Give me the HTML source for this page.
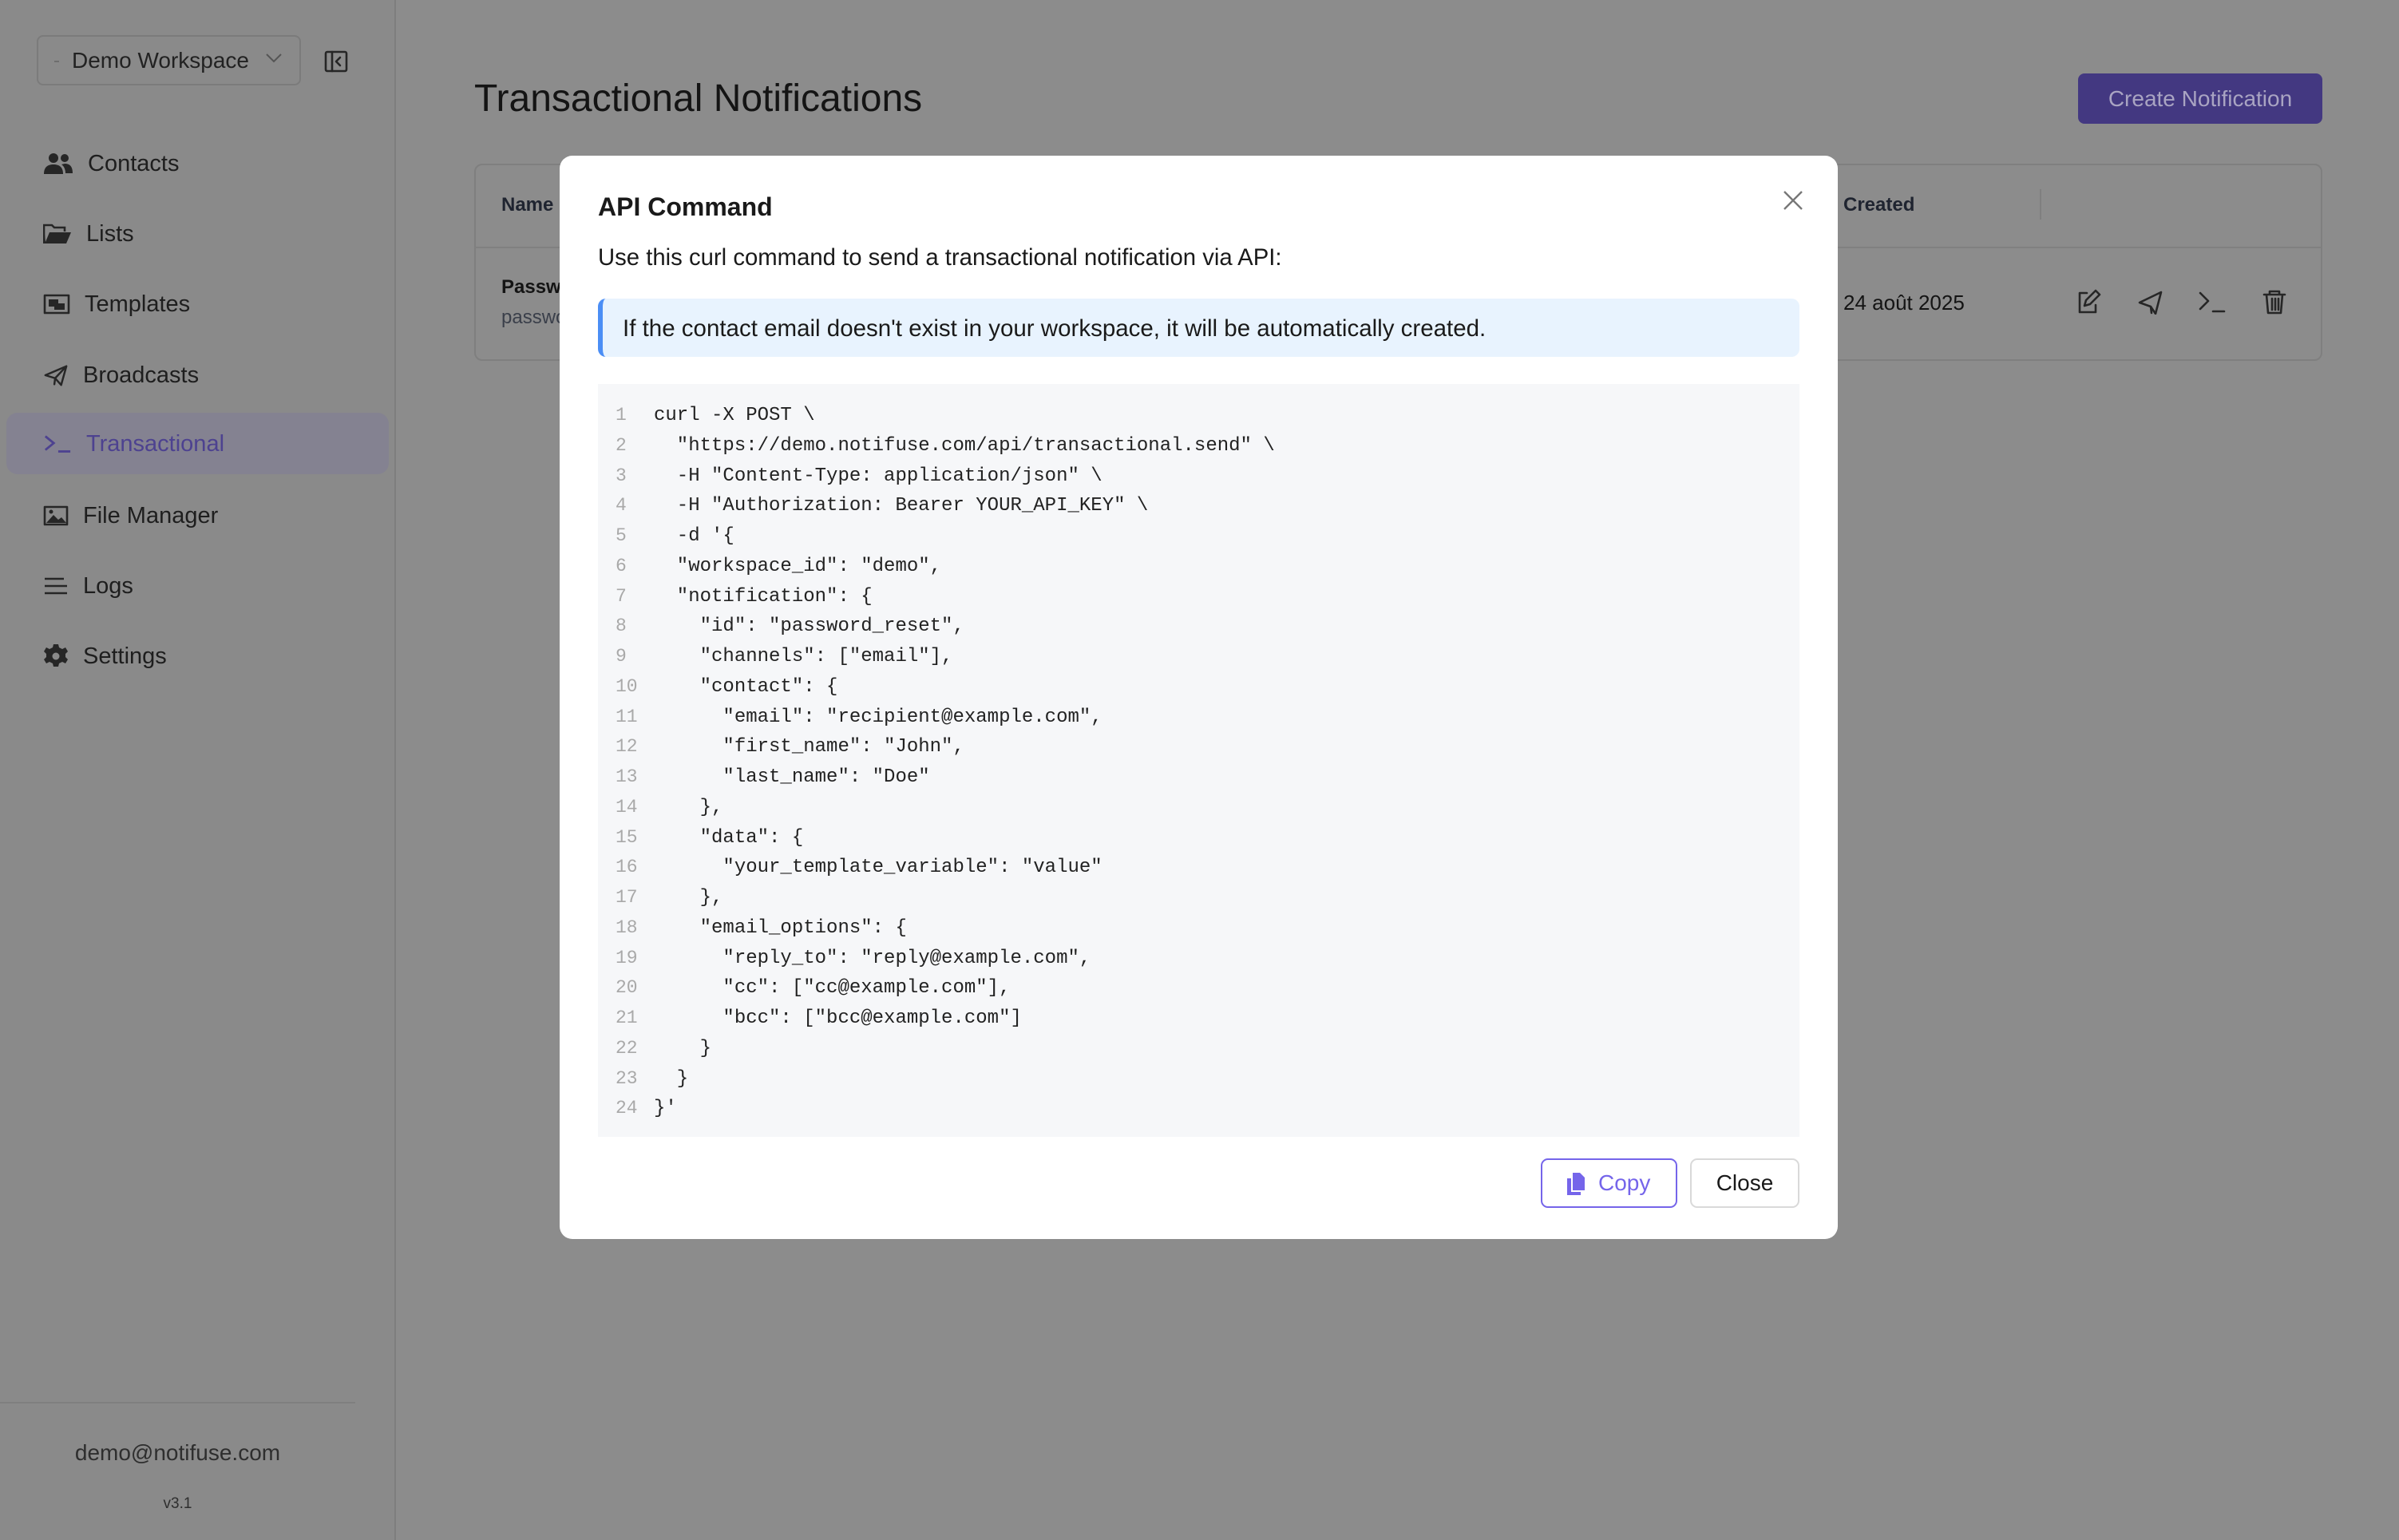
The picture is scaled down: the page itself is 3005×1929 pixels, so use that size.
<!DOCTYPE html>
<html><head><meta charset="utf-8">
<style>
*{box-sizing:border-box;margin:0;padding:0}
body{width:3005px;height:1929px;background:#8c8c8c;font-family:"Liberation Sans",sans-serif;position:relative;overflow:hidden;color:#1c1c1c}
.abs{position:absolute}
.side{left:0;top:0;width:496px;height:1929px;background:#8a8a8a;border-right:2px solid #7e7e7e}
.nav{position:absolute;left:54px;font-size:29px;color:#1e1e1e;display:flex;align-items:center;height:50px}
.nav svg{margin-right:18px}
.ico{stroke:#262626;fill:none;stroke-width:2.6;stroke-linecap:round;stroke-linejoin:round}
.modal{left:701px;top:195px;width:1601px;height:1357px;background:#fff;border-radius:16px}
.code{position:absolute;left:48px;top:286px;width:1505px;height:943px;background:#f6f7f9;font-family:"Liberation Mono",monospace;font-size:24px;color:#222;padding-top:21px}
.ln{height:37.75px;line-height:37.75px;white-space:pre;display:flex}
.ln span{width:70px;text-align:left;padding-left:22px;color:#a9a9a9;flex:none;font-size:23px}
</style></head><body>
<div class="abs side">
  <div class="abs" style="left:46px;top:44px;width:331px;height:63px;border:2px solid #7b7b7b;border-radius:8px"></div>
  <div class="abs" style="left:68px;top:76px;width:6px;height:2px;background:#6e6e6e"></div>
  <div class="abs" style="left:90px;top:56px;font-size:28px;color:#222;line-height:40px">Demo Workspace</div>
  <svg class="abs" style="left:332px;top:66px" width="22" height="14" viewBox="0 0 22 14"><path d="M2 2l9 9 9-9" fill="none" stroke="#555" stroke-width="2"/></svg>
  <svg class="abs" style="left:406px;top:62px" width="30" height="30" viewBox="0 0 30 30"><rect x="2" y="3" width="26" height="24" rx="2" class="ico"/><path d="M10 3v24M20 10l-5 5 5 5" class="ico"/></svg>

  <div class="nav" style="top:180px"><svg width="38" height="30" viewBox="0 0 38 30"><circle cx="13" cy="8" r="6" fill="#262626"/><circle cx="27" cy="8" r="5" fill="#262626"/><path d="M1 28c0-9 5-12 12-12s12 3 12 12z" fill="#262626"/><path d="M27 15c6 0 10 3 10 12h-9c0-5-2-9-5-11z" fill="#262626"/></svg>Contacts</div>
  <div class="nav" style="top:268px"><svg width="36" height="28" viewBox="0 0 36 28"><path d="M1 4v22h28l6-14H8L3 24" fill="#262626"/><path d="M1 26V3h10l3 3h13v5" fill="none" stroke="#262626" stroke-width="2.6"/></svg>Lists</div>
  <div class="nav" style="top:356px"><svg width="34" height="28" viewBox="0 0 34 28"><rect x="2" y="3" width="30" height="22" class="ico"/><rect x="7" y="8" width="12" height="9" fill="#262626"/><rect x="14" y="13" width="13" height="8" fill="#262626"/></svg>Templates</div>
  <div class="nav" style="top:445px"><svg width="32" height="30" viewBox="0 0 34 30"><path d="M3 15L31 3 24 28 16 19z M16 19L31 3" class="ico"/><path d="M16 19l-1 8" class="ico"/></svg>Broadcasts</div>
  <div class="abs" style="left:8px;top:517px;width:479px;height:77px;background:#848291;border-radius:14px"></div>
  <div class="nav" style="top:531px;color:#4d4290"><svg width="36" height="26" viewBox="0 0 38 26"><path d="M3 3l11 9-11 9" fill="none" stroke="#4d4290" stroke-width="3"/><path d="M20 23h16" stroke="#4d4290" stroke-width="3"/></svg>Transactional</div>
  <div class="nav" style="top:621px"><svg width="32" height="28" viewBox="0 0 32 28"><rect x="2" y="3" width="28" height="22" class="ico"/><path d="M4 23l9-10 6 6 4-3 6 7z" fill="#262626"/><circle cx="10" cy="9" r="2.5" fill="#262626"/></svg>File Manager</div>
  <div class="nav" style="top:709px"><svg width="32" height="26" viewBox="0 0 32 26"><path d="M2 4h24M2 13h28M2 22h28" stroke="#262626" stroke-width="2.6"/></svg>Logs</div>
  <div class="nav" style="top:797px"><svg width="32" height="32" viewBox="0 0 32 32"><path d="M13 1h6l1 4 4 2 4-2 3 5-3 3v4l3 3-3 5-4-2-4 2-1 4h-6l-1-4-4-2-4 2-3-5 3-3v-4l-3-3 3-5 4 2 4-2z" fill="#262626"/><circle cx="16" cy="16" r="4.5" fill="#8a8a8a"/></svg>Settings</div>

  <div class="abs" style="left:0;top:1756px;width:445px;height:2px;background:#7f7f7f"></div>
  <div class="abs" style="left:0;width:445px;top:1804px;text-align:center;font-size:28px;color:#2e2e2e">demo@notifuse.com</div>
  <div class="abs" style="left:0;width:445px;top:1873px;text-align:center;font-size:19px;color:#2e2e2e">v3.1</div>
</div>

<div class="abs" style="left:594px;top:96px;font-size:48px;color:#141414">Transactional Notifications</div>
<div class="abs" style="left:2603px;top:92px;width:306px;height:63px;background:#433881;border-radius:8px;color:#a9a4c2;font-size:28px;text-align:center;line-height:63px">Create Notification</div>
<div class="abs" style="left:594px;top:205px;width:2315px;height:247px;border:2px solid #7f7f7f;border-radius:10px"></div>
<div class="abs" style="left:594px;top:309px;width:2315px;height:2px;background:#808080"></div>
<div class="abs" style="left:628px;top:243px;font-size:24px;font-weight:bold;color:#1f2430">Name</div>
<div class="abs" style="left:2309px;top:243px;font-size:24px;font-weight:bold;color:#1f2430">Created</div>
<div class="abs" style="left:2555px;top:237px;width:2px;height:38px;background:#7f7f7f"></div>
<div class="abs" style="left:628px;top:346px;font-size:24px;font-weight:bold;color:#141414">Password</div>
<div class="abs" style="left:628px;top:384px;font-size:24px;color:#3a3f4a">password</div>
<div class="abs" style="left:2309px;top:364px;font-size:26px;color:#141414">24 août 2025</div>
<svg class="abs" style="left:2600px;top:362px" width="280" height="32" viewBox="0 0 280 32">
<path d="M14 5H5v24h20v-9 M11 21l2-7 12-12 5 5-12 12z" class="ico"/>
<path d="M80 17l27-13-7 27-6-9z M94 22l1 8" class="ico"/>
<path d="M156 5l10 10-10 10 M172 28h14" class="ico" stroke-width="3"/>
<path d="M236 7h26 M243 7V3h12v4 M239 7l2 23h16l2-23 M246 12v14 M250 12v14 M254 12v14" class="ico"/>
</svg>

<div class="abs modal">
  <div class="abs" style="left:48px;top:46px;font-size:32px;font-weight:bold;color:#1a1a1a">API Command</div>
  <svg class="abs" style="left:1532px;top:43px" width="26" height="26" viewBox="0 0 26 26"><path d="M2 2l22 22M24 2L2 24" stroke="#777" stroke-width="2.4"/></svg>
  <div class="abs" style="left:48px;top:111px;font-size:29.3px;color:#1a1a1a">Use this curl command to send a transactional notification via API:</div>
  <div class="abs" style="left:48px;top:179px;width:1505px;height:73px;background:#e8f3fe;border-left:6px solid #4b8ef5;border-radius:10px;font-size:29.5px;line-height:75px;padding-left:25px;color:#1a1a1a">If the contact email doesn't exist in your workspace, it will be automatically created.</div>
  <div class="code">
<div class="ln"><span>1</span>curl -X POST \</div>
<div class="ln"><span>2</span>  "https://demo.notifuse.com/api/transactional.send" \</div>
<div class="ln"><span>3</span>  -H "Content-Type: application/json" \</div>
<div class="ln"><span>4</span>  -H "Authorization: Bearer YOUR_API_KEY" \</div>
<div class="ln"><span>5</span>  -d '{</div>
<div class="ln"><span>6</span>  "workspace_id": "demo",</div>
<div class="ln"><span>7</span>  "notification": {</div>
<div class="ln"><span>8</span>    "id": "password_reset",</div>
<div class="ln"><span>9</span>    "channels": ["email"],</div>
<div class="ln"><span>10</span>    "contact": {</div>
<div class="ln"><span>11</span>      "email": "recipient@example.com",</div>
<div class="ln"><span>12</span>      "first_name": "John",</div>
<div class="ln"><span>13</span>      "last_name": "Doe"</div>
<div class="ln"><span>14</span>    },</div>
<div class="ln"><span>15</span>    "data": {</div>
<div class="ln"><span>16</span>      "your_template_variable": "value"</div>
<div class="ln"><span>17</span>    },</div>
<div class="ln"><span>18</span>    "email_options": {</div>
<div class="ln"><span>19</span>      "reply_to": "reply@example.com",</div>
<div class="ln"><span>20</span>      "cc": ["cc@example.com"],</div>
<div class="ln"><span>21</span>      "bcc": ["bcc@example.com"]</div>
<div class="ln"><span>22</span>    }</div>
<div class="ln"><span>23</span>  }</div>
<div class="ln"><span>24</span>}'</div>
  </div>
  <div class="abs" style="left:1229px;top:1256px;width:171px;height:62px;border:2px solid #7565ea;border-radius:9px;color:#7565ea;font-size:28px;line-height:58px;padding-left:70px">Copy</div>
  <svg class="abs" style="left:1260px;top:1273px" width="26" height="30" viewBox="0 0 26 30"><path d="M9 1h9l6 6v16H9z" fill="#7565ea"/><path d="M2 8h5v17h12v4H2z" fill="#7565ea"/></svg>
  <div class="abs" style="left:1416px;top:1256px;width:137px;height:62px;border:2px solid #d9d9d9;border-radius:9px;color:#1a1a1a;font-size:28px;line-height:58px;text-align:center">Close</div>
</div>
</body></html>
